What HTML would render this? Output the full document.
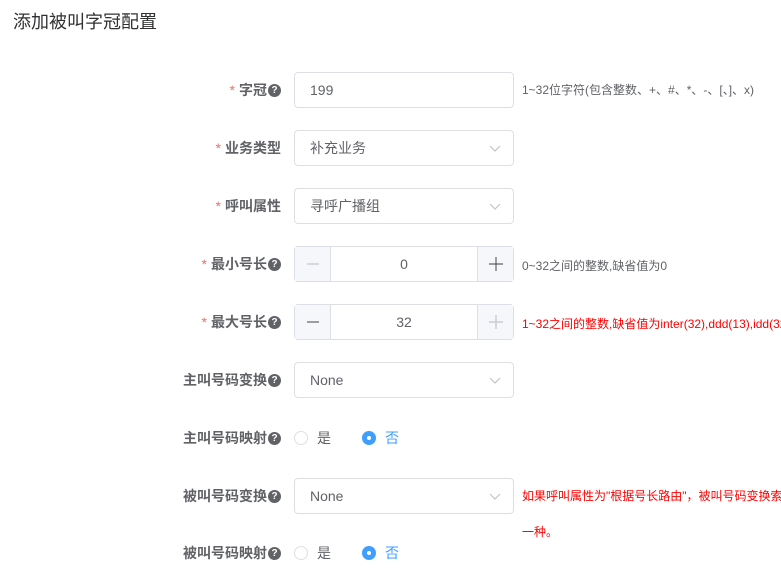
<!DOCTYPE html>
<html><head><meta charset="utf-8">
<style>
*{box-sizing:border-box;margin:0;padding:0}
body{width:781px;height:569px;overflow:hidden;background:#fff;font-family:"Liberation Sans","Noto Sans CJK SC",sans-serif;position:relative;color:#606266}
.title{position:absolute;left:13px;top:8px;font-size:18px;color:#303133}
.lab{position:absolute;right:500px;font-size:14px;font-weight:bold;color:#606266;height:36px;line-height:36px;white-space:nowrap;display:flex;align-items:center}
.lab .s{color:#f56c6c;margin-right:4px;font-weight:normal}
.q{display:inline-block;width:13px;height:13px;border-radius:50%;background:#606266;color:#fff;font-size:10px;line-height:13px;text-align:center;margin-left:1px}
.inp{position:absolute;left:294px;width:220px;height:36px;border:1px solid #dcdfe6;border-radius:4px;font-size:14px;line-height:34px;padding-left:15px;color:#606266}
.arr{position:absolute;right:12px;top:14px}
.num{position:absolute;left:294px;width:220px;height:36px;border:1px solid #dcdfe6;border-radius:4px;font-size:14px;line-height:34px;text-align:center}
.num .b{position:absolute;top:0;width:36px;height:34px;background:#f5f7fa;display:flex;align-items:center;justify-content:center}
.num .l{left:0;border-right:1px solid #dcdfe6}
.num .r{right:0;border-left:1px solid #dcdfe6}
.hint{position:absolute;left:522px;font-size:12px;white-space:nowrap;color:#606266}
.red{color:#f00}
.rad{position:absolute;font-size:14px;height:16px;line-height:16px}
.c{position:absolute;width:14px;height:14px;border-radius:50%;border:1px solid #dcdfe6}
.c.on{background:#409eff;border-color:#409eff}
.c.on:after{content:"";position:absolute;left:4px;top:4px;width:4px;height:4px;border-radius:50%;background:#fff}
</style></head><body>
<div class="title">添加被叫字冠配置</div>

<div class="lab" style="top:72px"><span class="s">*</span>字冠<span class="q">?</span></div>
<div class="inp" style="top:72px">199</div>
<div class="hint" style="top:81px">1~32位字符(包含整数、+、#、*、-、[、]、x)</div>

<div class="lab" style="top:130px"><span class="s">*</span>业务类型</div>
<div class="inp" style="top:130px">补充业务<svg class="arr" width="12" height="7" viewBox="0 0 12 7"><path d="M1 1l5 5 5-5" fill="none" stroke="#c0c4cc" stroke-width="1.2"/></svg></div>

<div class="lab" style="top:188px"><span class="s">*</span>呼叫属性</div>
<div class="inp" style="top:188px">寻呼广播组<svg class="arr" width="12" height="7" viewBox="0 0 12 7"><path d="M1 1l5 5 5-5" fill="none" stroke="#c0c4cc" stroke-width="1.2"/></svg></div>

<div class="lab" style="top:246px"><span class="s">*</span>最小号长<span class="q">?</span></div>
<div class="num" style="top:246px"><span class="b l"><svg width="12" height="12"><path d="M0 6h12" stroke="#c0c4cc" stroke-width="1.2"/></svg></span>0<span class="b r"><svg width="14" height="14"><path d="M0 7h14M7 0v14" stroke="#606266" stroke-width="1.2"/></svg></span></div>
<div class="hint" style="top:257px">0~32之间的整数,缺省值为0</div>

<div class="lab" style="top:304px"><span class="s">*</span>最大号长<span class="q">?</span></div>
<div class="num" style="top:304px"><span class="b l"><svg width="12" height="12"><path d="M0 6h12" stroke="#606266" stroke-width="1.2"/></svg></span>32<span class="b r"><svg width="14" height="14"><path d="M0 7h14M7 0v14" stroke="#c0c4cc" stroke-width="1.2"/></svg></span></div>
<div class="hint red" style="top:315px">1~32之间的整数,缺省值为inter(32),ddd(13),idd(32)</div>

<div class="lab" style="top:362px">主叫号码变换<span class="q">?</span></div>
<div class="inp" style="top:362px">None<svg class="arr" width="12" height="7" viewBox="0 0 12 7"><path d="M1 1l5 5 5-5" fill="none" stroke="#c0c4cc" stroke-width="1.2"/></svg></div>

<div class="lab" style="top:420px">主叫号码映射<span class="q">?</span></div>
<div class="c" style="left:294px;top:431px"></div><div class="rad" style="left:317px;top:430px">是</div>
<div class="c on" style="left:362px;top:431px"></div><div class="rad" style="left:385px;top:430px;color:#409eff">否</div>

<div class="lab" style="top:478px">被叫号码变换<span class="q">?</span></div>
<div class="inp" style="top:478px">None<svg class="arr" width="12" height="7" viewBox="0 0 12 7"><path d="M1 1l5 5 5-5" fill="none" stroke="#c0c4cc" stroke-width="1.2"/></svg></div>
<div class="hint red" style="top:487px">如果呼叫属性为"根据号长路由"，被叫号码变换索引</div>
<div class="hint red" style="top:523px">一种。</div>

<div class="lab" style="top:535px">被叫号码映射<span class="q">?</span></div>
<div class="c" style="left:294px;top:546px"></div><div class="rad" style="left:317px;top:545px">是</div>
<div class="c on" style="left:362px;top:546px"></div><div class="rad" style="left:385px;top:545px;color:#409eff">否</div>
</body></html>
